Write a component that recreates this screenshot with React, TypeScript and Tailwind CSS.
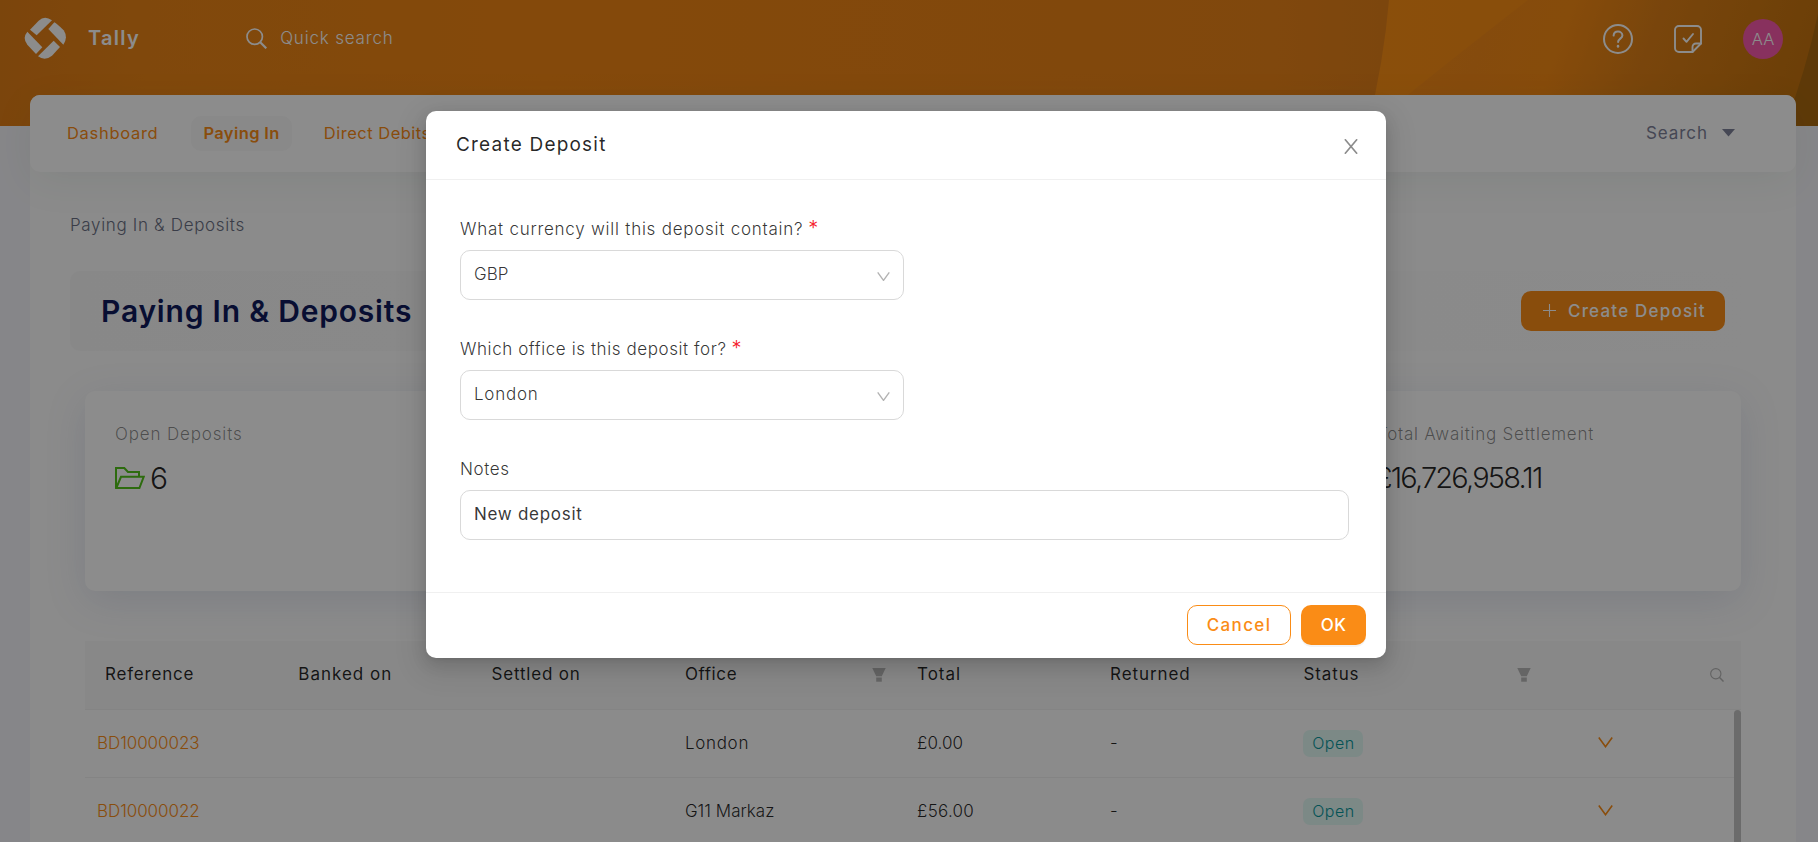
import React from "react";

const columns =
  "grid grid-cols-[193.3px_193.3px_193.3px_232.2px_193px_193.3px_239.6px_218px] items-center";

const rows = [
  {
    reference: "BD10000023",
    office: "London",
    officeTracking: "tracking-[0.7px]",
    total: "£0.00",
    totalTracking: "tracking-[0.05px]",
  },
  {
    reference: "BD10000022",
    office: "G11 Markaz",
    officeTracking: "tracking-[0.03px]",
    total: "£56.00",
    totalTracking: "tracking-[0.25px]",
  },
];

function HeaderBackdrop() {
  return (
    <svg className="absolute inset-0 size-full" viewBox="0 0 1818 126" preserveAspectRatio="none">
      <defs>
        <linearGradient id="base" x1="0" x2="1" y1="0" y2="0">
          <stop offset="0" stopColor="#e17e16" />
          <stop offset="0.08" stopColor="#ea8416" />
          <stop offset="0.3" stopColor="#f18614" />
          <stop offset="0.7" stopColor="#ea8318" />
          <stop offset="0.76" stopColor="#e28019" />
        </linearGradient>
        <linearGradient id="sheet" x1="0" x2="1" y1="0" y2="0">
          <stop offset="0" stopColor="#fc9014" />
          <stop offset="0.45" stopColor="#f88d14" />
          <stop offset="0.7" stopColor="#dc7d18" />
          <stop offset="1" stopColor="#c87514" />
        </linearGradient>
        <linearGradient id="fold" x1="0" x2="1" y1="0" y2="0.1">
          <stop offset="0" stopColor="#f88d16" />
          <stop offset="0.28" stopColor="#f38918" />
          <stop offset="0.45" stopColor="#f58a14" />
          <stop offset="0.65" stopColor="#dd7f16" />
          <stop offset="1" stopColor="#c6740f" />
        </linearGradient>
      </defs>
      <rect width="1818" height="126" fill="url(#base)" />
      <path d="M1389 0H1818V126H1368Q1384 60 1389 0Z" fill="url(#sheet)" />
      <path d="M1528 0H1818V126H1370Q1430 76 1528 0Z" fill="url(#fold)" />
      <path d="M1818 14V126H1785Q1806 70 1818 14Z" fill="#ac690f" />
    </svg>
  );
}

function Logo() {
  return (
    <svg className="size-[43px]" viewBox="74 52 129 129" fill="#fff">
      <path d="M92 90L118 63Q136 46 158 62L112 107Z" />
      <path d="M165 68Q173 72 193 92Q207 113 192 135L147 88Z" />
      <path d="M163 123L182 142L158 168Q137 185 116 170Z" />
      <path d="M84 96Q68 115 84 135L110 163L129 143Z" />
    </svg>
  );
}

function HelpIcon() {
  return (
    <svg className="size-[30px]" viewBox="0 0 30 30" fill="none" stroke="#fff" strokeWidth="2" strokeLinecap="round">
      <circle cx="15" cy="15" r="14" />
      <path d="M10.600 11.600C10.800 9 12.600 7.600 15 7.600s4.400 1.600 4.400 3.900c0 3-4.300 3.300-4.300 6.500" />
      <path d="M15 22.100v.3" strokeWidth="2.500" />
    </svg>
  );
}

function NoteIcon() {
  return (
    <svg
      className="size-[28px]"
      viewBox="0 0 28 28"
      fill="none"
      stroke="#fff"
      strokeWidth="1.900"
      strokeLinecap="round"
      strokeLinejoin="round"
    >
      <path d="M27 18.500V5a4 4 0 0 0-4-4H5a4 4 0 0 0-4 4v18a4 4 0 0 0 4 4h13.500z" />
      <path d="M18.500 27v-5a3.500 3.500 0 0 1 3.500-3.500h5" />
      <path d="M9.500 13.500l3 3.300L19 9" />
    </svg>
  );
}

function SearchIcon({ className }: { className: string }) {
  return (
    <svg className={className} viewBox="0 0 21 21" fill="none" stroke="currentColor" strokeWidth="1.700">
      <circle cx="8.700" cy="8.700" r="7.700" />
      <path d="M14 14L20.300 20.300" strokeWidth="2.200" />
    </svg>
  );
}

function ChevronIcon({ className }: { className: string }) {
  return (
    <svg className={className} viewBox="0 0 15 11" fill="none" stroke="currentColor" strokeWidth="1.600">
      <path d="M0.800 0.500L7.500 9.700L14.200 0.500" />
    </svg>
  );
}

function FilterIcon({ className }: { className: string }) {
  return (
    <svg className={className} viewBox="0 0 14 14" fill="currentColor">
      <path d="M0.300 0H13.700L9.800 8.200H4.200Z" />
      <path d="M4.200 9.500H9.800V13.700H4.200Z" />
    </svg>
  );
}

function FolderIcon() {
  return (
    <svg className="mr-[5px] h-[22px] w-[30px] text-[#52c41a]" viewBox="0 0 30 22" fill="none" stroke="currentColor" strokeWidth="2">
      <path d="M1 21V1H9.300L13 5H24V9.800" />
      <path d="M1.300 21L6 9.800H28.700L24.400 21Z" />
    </svg>
  );
}

function Required() {
  return <span className="ml-[5px] inline-block h-4 text-[20px] leading-5 text-[#f5222d]">*</span>;
}

function SelectBox({ value, tracking }: { value: string; tracking: string }) {
  return (
    <div className="flex h-[50px] w-[444px] items-center justify-between rounded-[10px] border border-[#d9d9d9] pr-[13px] pb-[2px] pl-[13px]">
      <span className={tracking}>{value}</span>
      <ChevronIcon className="mt-[5px] h-[9.5px] w-[13px] text-black/30" />
    </div>
  );
}

export default function App() {
  return (
    <div className="relative h-[842px] w-full overflow-hidden bg-[#f5f5f9] font-['Inter','Open_Sans',sans-serif] text-[17px] leading-6 font-light whitespace-nowrap">
      <header className="relative h-[126px]">
        <HeaderBackdrop />
        <div className="relative flex h-[77px] items-center pr-[35px] pl-[24px] text-white">
          <Logo />
          <span className="-mt-px ml-[21px] text-[20px] font-semibold tracking-[1.3px]">Tally</span>
          <SearchIcon className="ml-[106px] size-[21px]" />
          <span className="-mt-px ml-[13px] tracking-[0.82px]">Quick search</span>
          <div className="mt-px ml-auto flex items-center">
            <HelpIcon />
            <div className="ml-[41px]">
              <NoteIcon />
            </div>
            <span className="ml-[41px] flex size-10 items-center justify-center rounded-full bg-[#f759ab] text-[16.500px]">
              AA
            </span>
          </div>
        </div>
      </header>

      <main className="relative -mt-[31px] mr-[22px] ml-[30px] h-[747px] rounded-t-[10px] bg-[#fdfdfd]">
        <nav className="flex h-[77px] items-center rounded-[10px] bg-white pr-[61px] pl-[25px] text-[16.500px] font-normal text-[#fa8c16] shadow-[0_10px_40px_rgba(40,80,60,0.07)]">
          <a className="px-3 pb-[2px] tracking-[0.7px]">Dashboard</a>
          <a className="ml-[21px] flex h-[35px] items-center rounded-[10px] bg-[#f9f9f9] px-3 pb-px font-semibold tracking-[0.38px]">
            Paying In
          </a>
          <a className="ml-5 px-3 pb-[2px] tracking-[0.5px]">Direct Debits</a>
          <div className="ml-auto flex items-center pb-[2px] text-[17px] text-[#7e8299]">
            <span className="tracking-[0.95px]">Search</span>
            <svg className="ml-[14px] h-[8px] w-[13px]" viewBox="0 0 13 8">
              <path d="M0 0H13L6.500 7.500Z" fill="#7e8299" />
            </svg>
          </div>
        </nav>

        <div className="pr-12 pl-10">
          <p className="pt-[41px] tracking-[0.66px] text-[#6b7084]">Paying In &amp; Deposits</p>
          <div className="mt-[34px] flex h-20 items-center justify-between rounded-[10px] bg-linear-to-r from-[#f8f8f8] to-[#fdfdfd] pr-[23px] pl-[31px]">
            <h1 className="text-[30px] font-semibold tracking-[0.8px] text-[#101a5c]">Paying In &amp; Deposits</h1>
            <button className="flex h-10 w-[204px] items-center rounded-[10px] bg-[#fa8c16] pb-px pl-[22px] font-medium text-white">
              <svg className="size-[13px]" viewBox="0 0 13 13" stroke="#fff" strokeWidth="1.100">
                <path d="M6.500 0V13M0 6.500H13" />
              </svg>
              <span className="ml-[12px] tracking-[1.2px]">Create Deposit</span>
            </button>
          </div>
        </div>

        <section className="mt-10 mr-[55px] ml-[55px] flex h-[200px] justify-between rounded-[10px] bg-white px-[30px] pt-[31px] shadow-[0_10px_40px_rgba(82,98,160,0.15)]">
          <div>
            <p className="tracking-[0.84px] text-black/45">Open Deposits</p>
            <p className="mt-[12px] flex h-10 items-center text-[30px] text-black/85">
              <FolderIcon />6
            </p>
          </div>
          <div className="w-[334px]">
            <p className="tracking-[0.75px] text-black/45">Total Awaiting Settlement</p>
            <p className="mt-[12px] -ml-[2px] flex h-10 items-center text-[29px] tracking-[-1.82px] text-black/85">
              £16,726,958.11
            </p>
          </div>
        </section>

        <section className="mt-[50px] mr-[55px] ml-[55px]">
          <div className={columns + " h-[69px] border-b border-[#f0f0f0] bg-[#f8f8f8] pb-[2px] font-normal text-black/85"}>
            <span className="pl-5 tracking-[0.8px]">Reference</span>
            <span className="pl-5 tracking-[1px]">Banked on</span>
            <span className="pl-5 tracking-[0.8px]">Settled on</span>
            <span className="flex items-center justify-between pr-[11px] pl-5 tracking-[0.6px]">
              Office
              <FilterIcon className="mt-px size-[14px] text-[#b8b8b8]" />
            </span>
            <span className="pl-5 tracking-[0.97px]">Total</span>
            <span className="pl-5 tracking-[0.9px]">Returned</span>
            <span className="flex items-center pl-5 tracking-[0.9px]">
              <span className="w-[214px] shrink-0">Status</span>
              <FilterIcon className="mt-px size-[14px] shrink-0 text-[#b8b8b8]" />
            </span>
            <SearchIcon className="mt-px mr-[17px] size-[14px] justify-self-end text-[#b4b4b4]" />
          </div>
          <div className="flex">
            <div className="w-[1649px]">
              {rows.map((row) => (
                <div
                  key={row.reference}
                  className={columns + " h-[68px] border-b border-[#f0f0f0] pb-[2px] text-black/85"}
                >
                  <a className="pl-3 tracking-[-0.07px] text-[#fa8c16]">{row.reference}</a>
                  <span />
                  <span />
                  <span className={"pl-5 " + row.officeTracking}>{row.office}</span>
                  <span className={"pl-5 " + row.totalTracking}>{row.total}</span>
                  <span className="pl-5">-</span>
                  <span className="pl-5">
                    <span className="mt-px inline-flex h-[27px] w-[60px] items-center justify-center rounded-[7px] bg-[#e2f9f5] text-[16px] tracking-[0.45px] text-[#08979c]">
                      Open
                    </span>
                  </span>
                  <ChevronIcon className="-mt-px ml-[75px] h-[11px] w-[15px] text-[#fa8c16]" />
                </div>
              ))}
            </div>
            <div className="h-[136px] w-[7px] rounded-t-full bg-[#c4c4c4]" />
          </div>
        </section>
      </main>

      <div className="absolute inset-0 flex items-start justify-center bg-black/45 pt-[111px] pr-[6px]">
        <section className="flex h-[547px] w-[960px] flex-col rounded-[10px] bg-white text-black/85 shadow-[0_3px_6px_-4px_rgba(0,0,0,0.12),0_6px_16px_rgba(0,0,0,0.12),0_9px_28px_8px_rgba(0,0,0,0.08)]">
          <div className="flex h-[69px] items-center justify-between border-b border-[#f0f0f0] pr-[28px] pb-px pl-[30px]">
            <h2 className="text-[19px] font-normal tracking-[1.2px]">Create Deposit</h2>
            <svg className="mt-[3px] h-[15px] w-[14px] text-black/45" viewBox="0 0 14 15" stroke="currentColor" strokeWidth="1.700">
              <path d="M0.900 0.300L13.100 14.700M13.100 0.300L0.900 14.700" />
            </svg>
          </div>
          <div className="flex-1 pt-[37px] pr-[37px] pl-[34px] text-black/80">
            <label className="block h-6">
              <span className="tracking-[0.75px]">What currency will this deposit contain?</span>
              <Required />
            </label>
            <div className="mt-[9px]">
              <SelectBox value="GBP" tracking="tracking-normal" />
            </div>
            <label className="mt-[37px] block h-6">
              <span className="tracking-[0.58px]">Which office is this deposit for?</span>
              <Required />
            </label>
            <div className="mt-[9px]">
              <SelectBox value="London" tracking="tracking-[0.75px]" />
            </div>
            <label className="mt-[37px] block h-6 tracking-[0.6px]">Notes</label>
            <div className="mt-[9px] flex h-[50px] items-center rounded-[10px] border border-[#d9d9d9] pb-[2px] pl-[13px] font-normal tracking-[0.71px]">
              New deposit
            </div>
          </div>
          <div className="flex h-[66px] items-center justify-end gap-[10px] border-t border-[#f0f0f0] pr-5 pb-px font-medium">
            <button className="h-10 w-[104px] rounded-[10px] border border-[#fa8c16] text-center tracking-[1.35px] text-[#fa8c16]">
              Cancel
            </button>
            <button className="h-10 w-[65px] rounded-[10px] bg-[#fa8c16] text-center tracking-[0.4px] text-white shadow-[0_2px_0_rgba(0,0,0,0.045)]">
              OK
            </button>
          </div>
        </section>
      </div>
    </div>
  );
}
